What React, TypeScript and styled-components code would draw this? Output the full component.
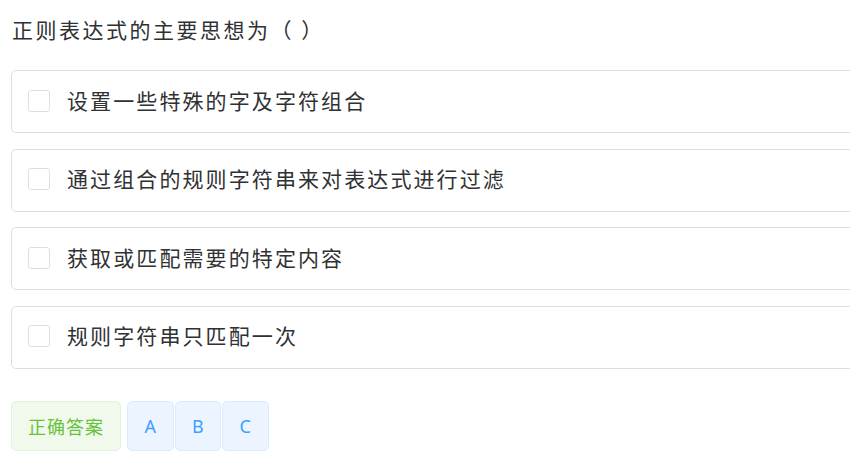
import React from "react";
import styled, { createGlobalStyle } from "styled-components";

const Global = createGlobalStyle`
  html, body { margin: 0; padding: 0; background: #fff; overflow: hidden; }
  body { font-family: "Noto Sans CJK SC", "Noto Sans", sans-serif; }
`;

const Page = styled.div`
  width: 900px;
  padding: 14px 0 0 11px;
  box-sizing: border-box;
`;

const Title = styled.div`
  font-size: 21px;
  line-height: 30px;
  letter-spacing: 2.5px;
  color: #303133;
  padding-left: 1px;
`;

const OptionList = styled.div`
  display: flex;
  flex-direction: column;
  gap: 15.67px;
  margin-top: 26px;
`;

const OptionCard = styled.label`
  display: flex;
  align-items: center;
  height: 63px;
  box-sizing: border-box;
  border: 1px solid #dcdfe6;
  border-radius: 5px;
  padding: 0 0 2px 16px;
  background: #fff;
`;

const Box = styled.span`
  width: 22px;
  height: 22px;
  box-sizing: border-box;
  border: 1px solid #dcdfe6;
  border-radius: 3px;
  background: #fff;
  flex: none;
`;

const OptionText = styled.span`
  margin-left: 17px;
  padding-bottom: 2px;
  font-size: 21px;
  letter-spacing: 2.1px;
  color: #303133;
`;

const Actions = styled.div`
  display: flex;
  align-items: center;
  margin-top: 32px;
`;

const Answer = styled.div`
  width: 110px;
  height: 50px;
  box-sizing: border-box;
  display: flex;
  align-items: center;
  justify-content: center;
  border: 1px solid #e1f3d8;
  background: #f0f9eb;
  color: #67c23a;
  border-radius: 5px;
  font-size: 18px;
  letter-spacing: 1px;
  margin-right: 5px;
`;

const Letter = styled.div`
  width: 46.5px;
  height: 50px;
  box-sizing: border-box;
  display: flex;
  align-items: center;
  justify-content: center;
  border: 1px solid #d9ecff;
  background: #ecf5ff;
  color: #409eff;
  border-radius: 5px;
  font-size: 18px;
  font-family: "Noto Sans", "Open Sans", sans-serif;
  margin-left: 1px;
`;

const options = [
  "设置一些特殊的字及字符组合",
  "通过组合的规则字符串来对表达式进行过滤",
  "获取或匹配需要的特定内容",
  "规则字符串只匹配一次",
];

export default function App() {
  return (
    <>
      <Global />
      <Page>
        <Title>正则表达式的主要思想为（ ）</Title>
        <OptionList>
          {options.map((o) => (
            <OptionCard key={o}>
              <Box />
              <OptionText>{o}</OptionText>
            </OptionCard>
          ))}
        </OptionList>
        <Actions>
          <Answer>正确答案</Answer>
          {["A", "B", "C"].map((l) => (
            <Letter key={l}>{l}</Letter>
          ))}
        </Actions>
      </Page>
    </>
  );
}
